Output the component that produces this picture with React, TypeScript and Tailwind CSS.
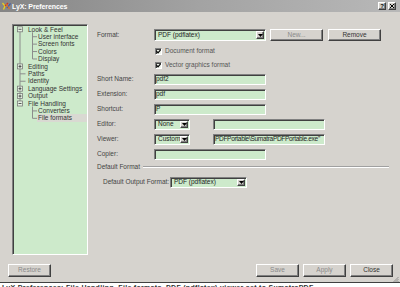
import React from "react";

const SUNKEN =
  "border border-t-[#808080] border-l-[#808080] border-r-white border-b-white shadow-[inset_1px_1px_0_#404040]";
const RAISED =
  "border border-t-white border-l-white border-r-[#404040] border-b-[#404040] shadow-[inset_-1px_-1px_0_#808080] bg-[#d6d3ce]";

function DropBtn() {
  return (
    <div className={`${RAISED} w-[8px] h-full flex items-center justify-center shrink-0`}>
      <svg width="5" height="3" viewBox="0 0 5 3">
        <path d="M0 0 H5 L2.5 3 Z" fill="#000" />
      </svg>
    </div>
  );
}

function Combo({ text, w }: { text: string; w: string }) {
  return (
    <div className={`${SUNKEN} ${w} h-full bg-[#cdeacb] flex items-stretch p-[1px]`}>
      <div className="flex-1 pl-[2px] flex items-center text-[#222] whitespace-nowrap overflow-hidden">
        {text}
      </div>
      <DropBtn />
    </div>
  );
}

function Field({ text, w, tight }: { text?: string; w: string; tight?: boolean }) {
  return (
    <div
      className={`${SUNKEN} ${w} h-full bg-[#cdeacb] pl-[1px] flex items-center text-[#222] whitespace-nowrap overflow-hidden ${
        tight ? "tracking-[-0.3px]" : ""
      }`}
    >
      {text}
    </div>
  );
}

function Btn({ label, w, dim }: { label: string; w: string; dim?: boolean }) {
  return (
    <div
      className={`${RAISED} ${w} h-full flex items-center justify-center ${
        dim ? "text-[#8a8a8a]" : "text-[#333]"
      }`}
    >
      {label}
    </div>
  );
}

function Check({ label }: { label: string }) {
  return (
    <div className="h-[8px] flex items-center pl-[57px]">
      <div className="w-[1px]" />
      <div className={`${SUNKEN} w-[7px] h-[7px] bg-[#eef3ea] flex items-center justify-center`}>
        <svg width="5" height="5" viewBox="0 0 5 5">
          <path d="M0.5 2.2 L2 3.8 L4.6 0.8" stroke="#000" strokeWidth="1.2" fill="none" />
        </svg>
      </div>
      <span className="ml-[3px] text-[#555]">{label}</span>
    </div>
  );
}

function Label({ children }: { children: React.ReactNode }) {
  return <div className="w-[57px] shrink-0 text-[#444]">{children}</div>;
}

const treeRows: { t: string; lvl: number; box?: "-" | "+"; sel?: boolean }[] = [
  { t: "Look & Feel", lvl: 0, box: "-" },
  { t: "User interface", lvl: 1 },
  { t: "Screen fonts", lvl: 1 },
  { t: "Colors", lvl: 1 },
  { t: "Display", lvl: 1 },
  { t: "Editing", lvl: 0, box: "+" },
  { t: "Paths", lvl: 0 },
  { t: "Identity", lvl: 0 },
  { t: "Language Settings", lvl: 0, box: "+" },
  { t: "Output", lvl: 0, box: "+" },
  { t: "File Handling", lvl: 0, box: "-" },
  { t: "Converters", lvl: 1 },
  { t: "File formats", lvl: 1, sel: true },
];

function Tree() {
  const step = 7.42;
  const c = (i: number) => 4.3 + step * i;
  const line = "#8c8c8c";
  return (
    <div className={`${SUNKEN} relative w-[76px] h-[231px] bg-[#cdeacb] ml-[12px] mt-[12px] shrink-0`}>
      <svg className="absolute left-0 top-0" width="74" height="229">
        <line x1="7" y1={c(0) + 2.5} x2="7" y2={c(10) - 2.5} stroke={line} strokeWidth="1" />
        <line x1="19.5" y1={c(0) + 3} x2="19.5" y2={c(4)} stroke={line} strokeWidth="1" />
        {[1, 2, 3, 4].map((i) => (
          <line key={i} x1="19.5" y1={c(i)} x2="24" y2={c(i)} stroke={line} strokeWidth="1" />
        ))}
        <line x1="19.5" y1={c(10) + 3} x2="19.5" y2={c(12)} stroke={line} strokeWidth="1" />
        {[11, 12].map((i) => (
          <line key={i} x1="19.5" y1={c(i)} x2="24" y2={c(i)} stroke={line} strokeWidth="1" />
        ))}
        {[6, 7].map((i) => (
          <line key={i} x1="7" y1={c(i)} x2="12.5" y2={c(i)} stroke={line} strokeWidth="1" />
        ))}
        {treeRows.map((r, i) =>
          r.box ? (
            <g key={i}>
              <rect x="4.5" y={c(i) - 2.5} width="5" height="5" fill="#e4f2e2" stroke="#7a7a7a" strokeWidth="0.8" />
              <line x1="5.5" y1={c(i)} x2="8.5" y2={c(i)} stroke="#333" strokeWidth="0.8" />
              {r.box === "+" && (
                <line x1="7" y1={c(i) - 1.5} x2="7" y2={c(i) + 1.5} stroke="#333" strokeWidth="0.8" />
              )}
            </g>
          ) : null
        )}
      </svg>
      <div className="relative pt-[0.6px]">
        {treeRows.map((r, i) => (
          <div
            key={i}
            className={`h-[7.42px] leading-[7.42px] whitespace-nowrap text-[#333] ${
              r.lvl === 0 ? "pl-[14px]" : "pl-[24px]"
            }`}
          >
            <div className={`${r.sel ? "bg-[#d9d9d2]" : ""} pl-[1px]`}>{r.t}</div>
          </div>
        ))}
      </div>
    </div>
  );
}

function LyxIcon() {
  return (
    <svg width="9" height="8" viewBox="0 0 9 8">
      <path d="M0.5 1 L3 4 L1.5 7.5" stroke="#e8d020" strokeWidth="1.3" fill="none" />
      <path d="M3 4 L6 1" stroke="#d03020" strokeWidth="1.3" fill="none" />
      <path d="M5 6 L8.5 1.5" stroke="#3050c0" strokeWidth="1.2" fill="none" />
      <path d="M4 2 L7.5 7" stroke="#e07020" strokeWidth="1.2" fill="none" />
    </svg>
  );
}

export default function App() {
  return (
    <div className="w-[400px] h-[287px] overflow-hidden bg-[#d6d3ce] font-['Liberation_Sans',Arial,sans-serif] text-[6.5px] leading-none flex flex-col">
      <div className="h-[12px] shrink-0 bg-gradient-to-r from-[#858585] via-[#a3a3a3] to-[#b8b8b8] flex items-center pl-[2px] pr-[4px]">
        <LyxIcon />
        <span className="ml-[1px] text-white font-bold text-[7px] tracking-[-0.1px]">LyX: Preferences</span>
        <div className="flex-1" />
        <div className={`${RAISED} w-[8px] h-[8px] flex items-center justify-center text-[6px] font-bold text-black`}>
          ?
        </div>
        <div className={`${RAISED} w-[8px] h-[8px] ml-[2px] flex items-center justify-center`}>
          <svg width="4" height="4" viewBox="0 0 4 4">
            <path d="M0 0 L4 4 M4 0 L0 4" stroke="#000" strokeWidth="1" />
          </svg>
        </div>
      </div>

      <div className="flex h-[243px] shrink-0">
        <Tree />
        <div className="ml-[9px] flex flex-col">
          <div className="mt-[17px] h-[12px] flex items-center">
            <Label>Format:</Label>
            <Combo text="PDF (pdflatex)" w="w-[112px]" />
            <div className="w-[4px]" />
            <Btn label="New..." w="w-[53px]" dim />
            <div className="w-[5px]" />
            <Btn label="Remove" w="w-[53px]" />
          </div>
          <div className="mt-[6px]">
            <Check label="Document format" />
          </div>
          <div className="mt-[6px]">
            <Check label="Vector graphics format" />
          </div>
          <div className="mt-[4.5px] h-[11px] flex items-center">
            <Label>Short Name:</Label>
            <Field text="pdf2" w="w-[112px]" />
          </div>
          <div className="mt-[4px] h-[11px] flex items-center">
            <Label>Extension:</Label>
            <Field text="pdf" w="w-[112px]" />
          </div>
          <div className="mt-[4px] h-[11px] flex items-center">
            <Label>Shortcut:</Label>
            <Field text="P" w="w-[112px]" />
          </div>
          <div className="mt-[4px] h-[11px] flex items-center">
            <Label>Editor:</Label>
            <Combo text="None" w="w-[36px]" />
            <div className="w-[23px]" />
            <Field w="w-[112px]" />
          </div>
          <div className="mt-[4px] h-[11px] flex items-center">
            <Label>Viewer:</Label>
            <Combo text="Custom" w="w-[36px]" />
            <div className="w-[23px]" />
            <Field text={'PDFPortable\\SumatraPDFPortable.exe"'} w="w-[112px]" tight />
          </div>
          <div className="mt-[4px] h-[11px] flex items-center">
            <Label>Copier:</Label>
            <Field w="w-[112px]" />
          </div>
          <div className="mt-[3.5px] h-[8px] flex items-center">
            <span className="text-[#444] whitespace-nowrap">Default Format</span>
            <div className="ml-[3px] w-[246px] h-[2px] border-t border-t-[#a0a0a0] border-b border-b-white" />
          </div>
          <div className="mt-[6px] h-[10.5px] flex items-center pl-[6px]">
            <div className="w-[67px] shrink-0 text-[#444] whitespace-nowrap">Default Output Format:</div>
            <Combo text="PDF (pdflatex)" w="w-[77px]" />
          </div>
        </div>
      </div>

      <div className="mt-[9px] h-[13px] shrink-0 flex items-center pl-[8px] pr-[7px]">
        <Btn label="Restore" w="w-[43px]" dim />
        <div className="flex-1" />
        <Btn label="Save" w="w-[43px]" dim />
        <div className="w-[4px]" />
        <Btn label="Apply" w="w-[43px]" dim />
        <div className="w-[4px]" />
        <Btn label="Close" w="w-[43px]" />
      </div>
      <div className="h-[5px] shrink-0 flex justify-end pr-[1px]">
        <svg width="7" height="5" viewBox="0 0 7 5">
          <path d="M6.5 0 L1.5 5 M6.5 2 L3.5 5 M6.5 4 L5.5 5" stroke="#808080" strokeWidth="0.8" />
        </svg>
      </div>
      <div className="h-[1px] shrink-0 bg-[#404040]" />
      <div className="flex-1 bg-white overflow-hidden">
        <div className="text-[7px] font-bold text-[#333] whitespace-nowrap leading-[7px] mt-[1px] pl-[2px] tracking-[0.3px]">
          LyX Preferences: File Handling, File formats, PDF (pdflatex) viewer set to SumatraPDF
        </div>
      </div>
    </div>
  );
}
